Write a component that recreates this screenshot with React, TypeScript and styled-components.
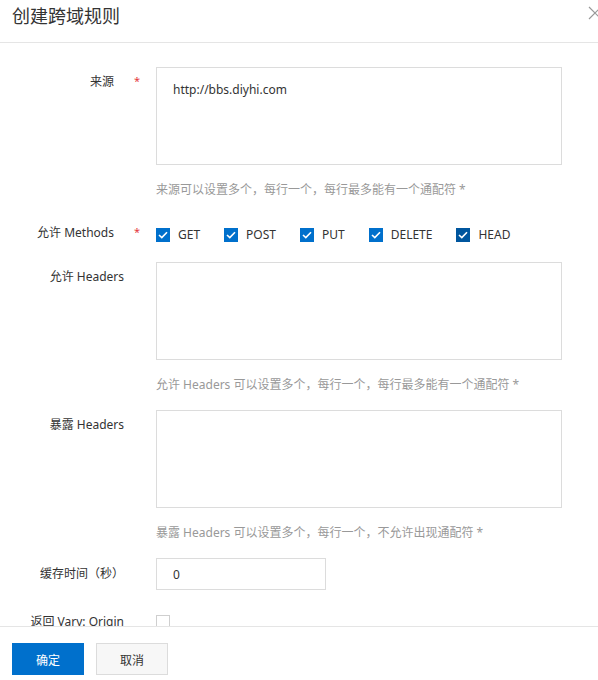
import React, { FC, useState } from "react"
import styled, { createGlobalStyle } from "styled-components"

const GlobalStyle = createGlobalStyle`
    html, body {
        margin: 0;
        padding: 0;
        background: #fff;
    }
    body {
        font-family: "Noto Sans", "Noto Sans CJK SC", sans-serif;
        font-size: 12px;
        color: #333;
    }
`

const METHODS = ["GET", "POST", "PUT", "DELETE", "HEAD"]

export default function App() {
    const [methods, setMethods] = useState<string[]>(METHODS)
    const [vary, setVary] = useState(false)

    const toggle = (m: string) =>
        setMethods(methods.includes(m) ? methods.filter(x => x !== m) : [...methods, m])

    return <>
        <GlobalStyle />
        <Dialog>
            <Header>
                <Title>创建跨域规则</Title>
                <Close aria-label="关闭">
                    <svg width="14" height="14" viewBox="0 0 14 14">
                        <path d="M1 1 L13 13 M13 1 L1 13" stroke="#999" strokeWidth="1.2" fill="none" />
                    </svg>
                </Close>
            </Header>
            <Body>
                <FormItem>
                    <FieldLabel text="来源" required top />
                    <Control>
                        <TextArea defaultValue="http://bbs.diyhi.com" />
                        <Hint>来源可以设置多个，每行一个，每行最多能有一个通配符 *</Hint>
                    </Control>
                </FormItem>
                <FormItem $methods>
                    <FieldLabel text="允许 Methods" required raise />
                    <MethodList>
                        {METHODS.map(m => (
                            <MethodItem key={m} onClick={() => toggle(m)}>
                                <Check $checked={methods.includes(m)} $hover={m === "HEAD"}>
                                    {methods.includes(m) && (
                                        <svg width="10" height="8" viewBox="0 0 10 8">
                                            <path d="M1 4 L3.8 6.6 L9 1.2" stroke="#fff" strokeWidth="1.6" fill="none" />
                                        </svg>
                                    )}
                                </Check>
                                {m}
                            </MethodItem>
                        ))}
                    </MethodList>
                </FormItem>
                <FormItem>
                    <FieldLabel text="允许 Headers" top />
                    <Control>
                        <TextArea />
                        <Hint>允许 Headers 可以设置多个，每行一个，每行最多能有一个通配符 *</Hint>
                    </Control>
                </FormItem>
                <FormItem>
                    <FieldLabel text="暴露 Headers" top />
                    <Control>
                        <TextArea />
                        <Hint>暴露 Headers 可以设置多个，每行一个，不允许出现通配符 *</Hint>
                    </Control>
                </FormItem>
                <FormItem $center>
                    <FieldLabel text="缓存时间（秒）" />
                    <Control>
                        <Input defaultValue="0" />
                    </Control>
                </FormItem>
                <FormItem $center>
                    <FieldLabel text="返回 Vary: Origin" />
                    <Control>
                        <Check $checked={vary} onClick={() => setVary(!vary)} />
                    </Control>
                </FormItem>
            </Body>
            <Footer>
                <Button $primary>确定</Button>
                <Button>取消</Button>
            </Footer>
        </Dialog>
    </>
}

const FieldLabel: FC<{ text: string, required?: boolean, top?: boolean, raise?: boolean }> = props => (
    <LabelCell $required={props.required} $top={props.top} $raise={props.raise}>
        {props.text}
        {props.required && <Star>*</Star>}
    </LabelCell>
)

const Dialog = styled.div`
    height: 680px;
    display: flex;
    flex-direction: column;
    overflow: hidden;
    background: #fff;
`

const Header = styled.div`
    height: 42px;
    flex: none;
    display: flex;
    align-items: flex-start;
    justify-content: space-between;
    border-bottom: 1px solid #e5e5e5;
    padding-left: 12px;
`

const Title = styled.div`
    font-family: "Noto Sans CJK SC", sans-serif;
    font-size: 18px;
    line-height: 30px;
    color: #333;
`

const Close = styled.div`
    margin-top: 6px;
    margin-right: -4px;
    width: 14px;
    height: 14px;
    display: flex;
    cursor: pointer;
`

const Body = styled.div`
    flex: 1;
    overflow: hidden;
    padding-top: 24px;
`

const FormItem = styled.div<{ $methods?: boolean, $center?: boolean }>`
    display: grid;
    grid-template-columns: 156px 406px;
    align-items: ${p => p.$methods || p.$center ? "center" : "start"};
    margin-bottom: ${p => p.$methods ? "12px" : "16px"};
    padding-top: ${p => p.$methods ? "5px" : "0"};
    min-height: ${p => p.$methods ? "30px" : p.$center ? "32px" : "0"};
`

const LabelCell = styled.div<{ $required?: boolean, $top?: boolean, $raise?: boolean }>`
    display: flex;
    justify-content: flex-end;
    align-items: flex-start;
    padding-right: ${p => p.$required ? "16px" : "32px"};
    padding-top: ${p => p.$top ? "6px" : "0"};
    margin-bottom: ${p => p.$raise ? "5px" : "0"};
    line-height: 18px;
    color: #333;
    white-space: nowrap;
`

const Star = styled.span`
    width: 26px;
    padding-left: 20px;
    box-sizing: border-box;
    color: #e4393c;
    font-size: 11px;
    line-height: 16px;
`

const Control = styled.div`
    display: flex;
    flex-direction: column;
    align-items: flex-start;
`

const TextArea = styled.textarea`
    box-sizing: border-box;
    width: 406px;
    height: 98px;
    border: 1px solid #dcdcdc;
    padding: 13px 16px;
    font-family: "Noto Sans", "Noto Sans CJK SC", sans-serif;
    font-size: 12px;
    line-height: 18px;
    color: #333;
    resize: none;
    outline: none;
`

const Input = styled.input`
    box-sizing: border-box;
    width: 170px;
    height: 32px;
    border: 1px solid #dcdcdc;
    padding: 0 16px;
    font-family: "Noto Sans", "Noto Sans CJK SC", sans-serif;
    font-size: 12px;
    color: #333;
    outline: none;
`

const Hint = styled.div`
    margin-top: 16px;
    line-height: 18px;
    color: #999;
`

const MethodList = styled.div`
    display: flex;
    align-items: center;
`

const MethodItem = styled.label`
    display: flex;
    align-items: center;
    gap: 8px;
    margin-right: 24px;
    line-height: 18px;
    color: #333;
    cursor: pointer;
`

const Check = styled.span<{ $checked?: boolean, $hover?: boolean }>`
    box-sizing: border-box;
    width: 14px;
    height: 14px;
    display: flex;
    align-items: center;
    justify-content: center;
    background: ${p => p.$checked ? (p.$hover ? "#00569e" : "#0070cc") : "#fff"};
    border: 1px solid ${p => p.$checked ? "transparent" : "#cfcfcf"};
    cursor: pointer;
`

const Footer = styled.div`
    flex: none;
    box-sizing: border-box;
    height: 54px;
    border-top: 1px solid #e5e5e5;
    display: flex;
    align-items: flex-start;
    gap: 12px;
    padding: 16px 12px 0;
`

const Button = styled.button<{ $primary?: boolean }>`
    width: 72px;
    height: 32px;
    font-family: "Noto Sans CJK SC", sans-serif;
    font-size: 12px;
    border: 1px solid ${p => p.$primary ? "#0070cc" : "#dcdcdc"};
    background: ${p => p.$primary ? "#0070cc" : "#f7f7f7"};
    color: ${p => p.$primary ? "#fff" : "#333"};
    cursor: pointer;
`
